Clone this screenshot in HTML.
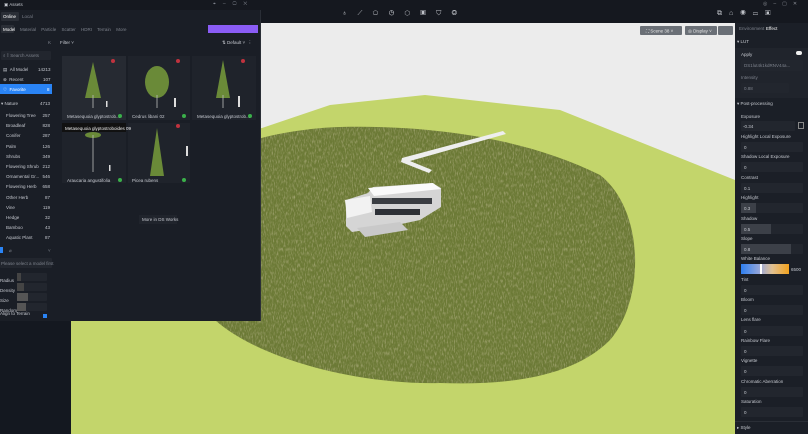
<!DOCTYPE html>
<html><head><meta charset="utf-8"><style>
*{margin:0;padding:0;box-sizing:border-box}
body{width:808px;height:434px;overflow:hidden;background:#15181f;font-family:"Liberation Sans",sans-serif;color:#c9ccd3;position:relative;font-size:4.5px}
.a{position:absolute;white-space:nowrap}
.t{position:absolute;white-space:nowrap;font-size:4.5px;color:#c5c8cf}
.dim{color:#7d828c}
.box{position:absolute;background:#22262e;border-radius:1px}
</style></head><body>
<div class="a" style="left:0;top:0;width:808px;height:23px;background:#15181f"></div>
<svg class="a" style="left:71px;top:23px" width="664" height="411" viewBox="71 23 664 411">
<defs>
<filter id="n" x="0" y="0" width="100%" height="100%"><feTurbulence type="fractalNoise" baseFrequency="0.9 0.25" numOctaves="2" seed="3"/><feColorMatrix values="0 0 0 0 0.66  0 0 0 0 0.6  0 0 0 0 0.4  0 0 0 1.2 -0.55"/><feComposite in2="SourceGraphic" operator="in"/></filter>
</defs>
<rect x="71" y="23" width="664" height="411" fill="#ececec"/>
<path d="M71 150 L262 128 L330 105 L425 95 L560 110 L735 180 L735 434 L71 434 Z" fill="#c3d56b"/>
<path id="ter" d="M200 175 C215 140 300 128 340 127 C420 125 520 135 600 175 C645 210 645 300 610 340 C570 380 500 385 440 383 C360 385 260 360 215 320 C190 290 190 250 200 175 Z" fill="#6c7a36"/>
<path d="M200 175 C215 140 300 128 340 127 C420 125 520 135 600 175 C645 210 645 300 610 340 C570 380 500 385 440 383 C360 385 260 360 215 320 C190 290 190 250 200 175 Z" fill="#6c7a36" filter="url(#n)"/>
<path d="M503 131 L506 134 L410 161 L432 170 L429 173 L401 162 L402 158 Z" fill="#eeeeee"/>
<polygon points="346,200 368,193 373,187 432,183 441,188 441,207 420,220 392,226 352,232 346,226" fill="#d5d5d5"/>
<polygon points="368,188 433,183 441,189 374,196" fill="#fafafa"/>
<polygon points="345,200 370,196 372,212 347,218" fill="#f2f2f2"/>
<rect x="372" y="198" width="60" height="6" fill="#3a3d42"/>
<rect x="375" y="209" width="45" height="6" fill="#2d3036"/>
<polygon points="357,228 400,222 408,230 365,237" fill="#c9c9c9"/>
<rect x="640" y="26" width="42" height="9" rx="1" fill="#6a6f76"/>
<rect x="685" y="26" width="32" height="9" rx="1" fill="#6a6f76"/>
<rect x="718" y="26" width="15" height="9" rx="1" fill="#6a6f76"/>
<text x="646" y="32.5" font-size="4.5" fill="#e6e6e6" font-family="Liberation Sans">⛶ Scene 38 ˅</text>
<text x="688" y="32.5" font-size="4.5" fill="#e6e6e6" font-family="Liberation Sans">◎ Display ˅</text>
</svg>
<div class="t" style="left:342px;top:10px;font-size:7px;color:#bfc2c8;letter-spacing:10.2px">♁⟋⬠◷⬡▣⛉◎</div>
<div class="t" style="left:717px;top:10px;font-size:7px;color:#bfc2c8;letter-spacing:7px">⧉⌂◉▭▣</div>
<div class="t" style="left:763px;top:1px;font-size:5px;color:#8a8e96;letter-spacing:6px">◎–▢✕</div>
<div class="a" style="left:735px;top:23px;width:73px;height:411px;background:#1b1f27"></div>
<div class="t dim" style="left:739px;top:26px">Environment</div>
<div class="t" style="left:766px;top:26px;color:#fff">Effect</div>
<div class="t" style="left:737px;top:39px">▾ LUT</div>
<div class="a" style="left:735px;top:48px;width:73px;height:50px;background:#20242c"></div>
<div class="t" style="left:741px;top:52px">Apply</div>
<div class="a" style="left:796px;top:51px;width:6px;height:4px;border-radius:2px;background:#eee"></div>
<div class="box" style="left:741px;top:60px;width:62px;height:11px"></div>
<div class="t dim" style="left:744px;top:63px">DS1lut4k1kdRNV44a...</div>
<div class="t dim" style="left:741px;top:75px">Intensity</div>
<div class="box" style="left:741px;top:83px;width:48px;height:10px"></div>
<div class="t dim" style="left:744px;top:86px">0.88</div>
<div class="t" style="left:737px;top:101px">▾ Post-processing</div>
<div class="t" style="left:741px;top:114px">Exposure</div>
<div class="box" style="left:741px;top:121px;width:54px;height:10px"></div>
<div class="t" style="left:743px;top:124px">-0.34</div>
<div class="a" style="left:798px;top:122px;width:6px;height:7px;border:1px solid #888"></div>
<div class="t" style="left:741px;top:134px">Highlight Local Exposure</div>
<div class="box" style="left:741px;top:142px;width:62px;height:10px"></div><div class="t" style="left:744px;top:145px">0</div>
<div class="t" style="left:741px;top:154px">Shadow Local Exposure</div>
<div class="box" style="left:741px;top:162px;width:62px;height:10px"></div><div class="t" style="left:744px;top:165px">0</div>
<div class="t" style="left:741px;top:175px">Contrast</div>
<div class="box" style="left:741px;top:183px;width:62px;height:10px"></div><div class="t" style="left:744px;top:186px">0.1</div>
<div class="t" style="left:741px;top:195px">Highlight</div>
<div class="box" style="left:741px;top:203px;width:62px;height:10px"></div><div class="a" style="left:741px;top:203px;width:15px;height:10px;background:#3c4048"></div><div class="t" style="left:744px;top:206px">0.3</div>
<div class="t" style="left:741px;top:216px">Shadow</div>
<div class="box" style="left:741px;top:224px;width:62px;height:10px"></div><div class="a" style="left:741px;top:224px;width:30px;height:10px;background:#3c4048"></div><div class="t" style="left:744px;top:227px">0.5</div>
<div class="t" style="left:741px;top:236px">Slope</div>
<div class="box" style="left:741px;top:244px;width:62px;height:10px"></div><div class="a" style="left:741px;top:244px;width:50px;height:10px;background:#3c4048"></div><div class="t" style="left:744px;top:247px">0.8</div>
<div class="t" style="left:741px;top:256px">White Balance</div>
<div class="a" style="left:741px;top:264px;width:48px;height:10px;background:linear-gradient(90deg,#2e7ff0,#9aa8d8 40%,#e0c090 65%,#f2a21e)"></div>
<div class="a" style="left:760px;top:264px;width:1.5px;height:10px;background:#fff"></div>
<div class="t" style="left:791px;top:267px">6500</div>
<div class="t" style="left:741px;top:277px">Tint</div><div class="box" style="left:741px;top:285px;width:62px;height:10px"></div><div class="t" style="left:744px;top:288px">0</div>
<div class="t" style="left:741px;top:297px">Bloom</div><div class="box" style="left:741px;top:305px;width:62px;height:10px"></div><div class="t" style="left:744px;top:308px">0</div>
<div class="t" style="left:741px;top:317px">Lens flare</div><div class="box" style="left:741px;top:326px;width:62px;height:10px"></div><div class="t" style="left:744px;top:329px">0</div>
<div class="t" style="left:741px;top:338px">Rainbow Flare</div><div class="box" style="left:741px;top:346px;width:62px;height:10px"></div><div class="t" style="left:744px;top:349px">0</div>
<div class="t" style="left:741px;top:358px">Vignette</div><div class="box" style="left:741px;top:366px;width:62px;height:10px"></div><div class="t" style="left:744px;top:369px">0</div>
<div class="t" style="left:741px;top:379px">Chromatic Aberration</div><div class="box" style="left:741px;top:387px;width:62px;height:10px"></div><div class="t" style="left:744px;top:390px">0</div>
<div class="t" style="left:741px;top:399px">Saturation</div><div class="box" style="left:741px;top:407px;width:62px;height:10px"></div><div class="t" style="left:744px;top:410px">0</div>
<div class="a" style="left:735px;top:421px;width:73px;height:1px;background:#2a2e36"></div>
<div class="t" style="left:737px;top:425px">▸ Style</div>
<div class="a" style="left:0;top:321px;width:71px;height:113px;background:#141820"></div>
<div class="a" style="left:0;top:0;width:261px;height:321px;background:#1a1e26;border-right:1px solid #2a2e36"></div>
<div class="a" style="left:0;top:0;width:261px;height:10px;background:#15181f"></div>
<div class="t" style="left:4px;top:2px">▣ Assets</div>
<div class="t dim" style="left:213px;top:1px;font-size:5px;letter-spacing:7px">⌖–▢✕</div>
<div class="a" style="left:1px;top:12px;width:18px;height:9px;background:#2a2e36;border-radius:1px"></div>
<div class="t" style="left:3px;top:14px;color:#fff">Online</div>
<div class="t dim" style="left:22px;top:14px">Local</div>
<div class="a" style="left:1px;top:25px;width:13px;height:8px;background:#2a2e36;border-radius:1px"></div>
<div class="t" style="left:3px;top:27px;color:#fff">Model</div>
<div class="t dim" style="left:20px;top:27px;word-spacing:4px">Material Particle Scatter HDRI Terrain More</div>
<div class="a" style="left:208px;top:25px;width:50px;height:8px;background:#8a5cf5"></div>
<div class="t dim" style="left:48px;top:40px">K</div>
<div class="t" style="left:60px;top:40px">Filter ˅</div>
<div class="t" style="left:222px;top:40px">⇅ Default ˅ &nbsp;⋮</div>
<div class="box" style="left:1px;top:51px;width:50px;height:9px"></div>
<div class="t dim" style="left:3px;top:53px">⌕ ⁑ Search Assets</div>
<div class="t" style="left:3px;top:67px">▤ &nbsp;All Model</div><div class="t" style="left:38px;top:67px">14213</div>
<div class="t" style="left:3px;top:77px">⊗ &nbsp;Recent</div><div class="t" style="left:43px;top:77px">107</div>
<div class="a" style="left:0;top:84px;width:52px;height:10px;background:#2a84f5"></div>
<div class="t" style="left:3px;top:87px;color:#fff">♡ &nbsp;Favorite</div><div class="t" style="left:47px;top:87px;color:#fff">8</div>
<div class="t" style="left:1px;top:101px">▾ Nature</div><div class="t" style="left:40px;top:101px">4713</div>
<div class="t" style="left:6px;top:111px;line-height:10.2px">Flowering Tree<br>Broadleaf<br>Conifer<br>Palm<br>Shrubs<br>Flowering Shrub<br>Ornamental Gr...<br>Flowering Herb<br>Other Herb<br>Vine<br>Hedge<br>Bamboo<br>Aquatic Plant</div>
<div class="t" style="left:41px;top:111px;line-height:10.2px;text-align:right;width:9px">257<br>828<br>287<br>126<br>349<br>212<br>546<br>658<br>87<br>119<br>32<br>43<br>87</div>
<div class="a" style="left:0;top:247px;width:3px;height:6px;background:#2a84f5"></div>
<div class="t dim" style="left:9px;top:248px">⌀</div><div class="t dim" style="left:48px;top:248px">˅</div>
<div class="box" style="left:0;top:258px;width:52px;height:10px"></div>
<div class="t dim" style="left:1px;top:261px">Please select a model first</div>
<div class="t" style="left:0;top:276px;line-height:10px">Radius<br>Density<br>Size<br>Random<br></div>
<div class="t" style="left:0;top:311px">Align to Terrain</div>
<div class="box" style="left:17px;top:273px;width:30px;height:8px"></div><div class="a" style="left:17px;top:273px;width:4px;height:8px;background:#444"></div>
<div class="box" style="left:17px;top:283px;width:30px;height:8px"></div><div class="a" style="left:17px;top:283px;width:7px;height:8px;background:#444"></div>
<div class="box" style="left:17px;top:293px;width:30px;height:8px"></div><div class="a" style="left:17px;top:293px;width:11px;height:8px;background:#555"></div>
<div class="box" style="left:17px;top:303px;width:30px;height:8px"></div><div class="a" style="left:17px;top:303px;width:9px;height:8px;background:#555"></div>
<div class="a" style="left:43px;top:314px;width:4px;height:4px;background:#2a84f5"></div>
<div class="a" style="left:62px;top:56px;width:64px;height:64px;background:#262a32"></div>
<div class="a" style="left:128px;top:56px;width:62px;height:64px;background:#1f232b"></div>
<div class="a" style="left:192px;top:56px;width:64px;height:64px;background:#1f232b"></div>
<div class="a" style="left:62px;top:123px;width:64px;height:60px;background:#1f232b"></div>
<div class="a" style="left:128px;top:123px;width:62px;height:60px;background:#1f232b"></div>
<svg class="a" style="left:0;top:0" width="261" height="200">
<g fill="#6a8a38"><polygon points="93,62 101,98 85,98"/><ellipse cx="157" cy="82" rx="12" ry="16"/><polygon points="223,60 230,98 216,98"/><polygon points="157,128 164,176 150,176"/><ellipse cx="93" cy="135" rx="8" ry="3"/></g>
<g stroke="#bbb" stroke-width="0.8"><line x1="93" y1="95" x2="93" y2="108"/><line x1="157" y1="95" x2="157" y2="108"/><line x1="223" y1="95" x2="223" y2="108"/><line x1="93" y1="135" x2="93" y2="172"/></g>
<g fill="#ddd"><rect x="106" y="101" width="1.5" height="6"/><rect x="174" y="98" width="2" height="9"/><rect x="238" y="96" width="2" height="11"/><rect x="109" y="165" width="1.5" height="6"/><rect x="186" y="146" width="2" height="10"/></g>
<g fill="#c0323e"><circle cx="113" cy="61" r="2"/><circle cx="178" cy="61" r="2"/><circle cx="243" cy="61" r="2"/><circle cx="178" cy="126" r="2"/></g>
<g fill="#3ab04a"><circle cx="120" cy="116" r="2"/><circle cx="184" cy="116" r="2"/><circle cx="250" cy="116" r="2"/><circle cx="120" cy="180" r="2"/><circle cx="184" cy="180" r="2"/></g>
</svg>
<div class="t" style="left:67px;top:114px">Metasequoia glyptostrob...</div>
<div class="t" style="left:132px;top:114px">Cedrus libani 02</div>
<div class="t" style="left:197px;top:114px">Metasequoia glyptostrob...</div>
<div class="a" style="left:62px;top:123px;width:64px;height:9px;background:#111"></div>
<div class="t" style="left:65px;top:126px;color:#eee">Metasequoia glyptostroboides 09</div>
<div class="t" style="left:67px;top:178px">Araucaria angustifolia</div>
<div class="t" style="left:132px;top:178px">Picea rubens</div>
<div class="a" style="left:139px;top:215px;width:38px;height:9px;background:#20242c"></div>
<div class="t" style="left:142px;top:217px">More in DS Works</div>
</body></html>
